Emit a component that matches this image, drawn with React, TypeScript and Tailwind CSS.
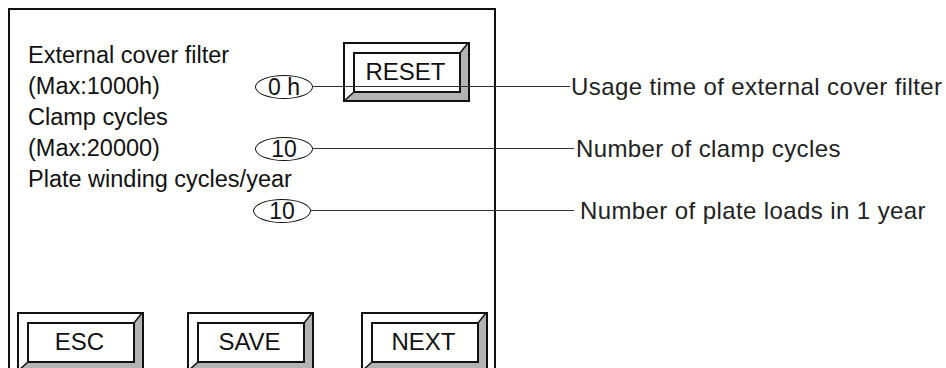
import React from "react";

const font = { fontFamily: '"Liberation Sans", Arial, sans-serif' };

function BevelButton({ label }: { label: string }) {
  return (
    <div className="relative w-[127px] h-[60px] flex items-center justify-center shrink-0">
      <svg className="absolute inset-0" width="127" height="60" viewBox="0 0 127 60">
        <rect x="1" y="1" width="125" height="58" fill="#ffffff" stroke="#111" strokeWidth="2" />
        <polygon points="125,1 125,59 1,59 11,50 117,50 117,11" fill="#b3b3b3" />
        <rect x="1" y="1" width="125" height="58" fill="none" stroke="#111" strokeWidth="2" />
        <rect x="11" y="11" width="106" height="39" fill="#ffffff" stroke="#111" strokeWidth="2" />
        <line x1="1" y1="59" x2="11" y2="50" stroke="#111" strokeWidth="1.5" />
        <line x1="125" y1="1" x2="117" y2="11" stroke="#111" strokeWidth="1.5" />
      </svg>
      <span className="relative text-[24px] leading-none text-[#111] -mt-[1px] -ml-[2px]">{label}</span>
    </div>
  );
}

function Oval({ value, lineWidth, gap, note }: { value: string; lineWidth: number; gap: number; note: string }) {
  return (
    <div className="relative w-[58px] h-[24px] rounded-[50%] border-[1.5px] border-[#111] flex items-center justify-center shrink-0">
      <span className="text-[23px] leading-none text-[#111] mt-[1px]">{value}</span>
      <div className="absolute left-full top-1/2 -translate-y-1/2 flex items-center z-10">
        <div className="h-[1.5px] bg-[#333]" style={{ width: lineWidth }} />
        <span
          className="text-[24px] leading-none whitespace-nowrap text-[#222] tracking-[0.4px]"
          style={{ marginLeft: gap }}
        >
          {note}
        </span>
      </div>
    </div>
  );
}

export default function App() {
  return (
    <div className="w-[946px] h-[368px] bg-white overflow-hidden" style={font}>
      <div className="ml-[8px] mt-[8px] w-[488px] h-[370px] border-2 border-b-0 border-[#111] flex flex-col">
        <div className="flex pt-[30px] pl-[18px]">
          <div className="flex flex-col text-[23.5px] leading-[31px] text-[#111]">
            <div className="h-[31px] flex items-center">External cover filter</div>
            <div className="h-[31px] flex items-center">
              <span className="w-[227px]">(Max:1000h)</span>
              <Oval value="0 h" lineWidth={258} gap={1} note="Usage time of external cover filter" />
            </div>
            <div className="h-[31px] flex items-center">Clamp cycles</div>
            <div className="h-[31px] flex items-center">
              <span className="w-[227px]">(Max:20000)</span>
              <Oval value="10" lineWidth={262} gap={2} note="Number of clamp cycles" />
            </div>
            <div className="h-[31px] flex items-center">Plate winding cycles/year</div>
            <div className="h-[31px] flex items-center">
              <span className="w-[225px]" />
              <Oval value="10" lineWidth={264} gap={6} note="Number of plate loads in 1 year" />
            </div>
          </div>
          <div className="ml-auto mr-[24px] mt-[2px]">
            <BevelButton label="RESET" />
          </div>
        </div>
        <div className="mt-auto mb-[6px] flex pl-[7px]">
          <BevelButton label="ESC" />
          <div className="ml-[43px]">
            <BevelButton label="SAVE" />
          </div>
          <div className="ml-[47px]">
            <BevelButton label="NEXT" />
          </div>
        </div>
      </div>
    </div>
  );
}
